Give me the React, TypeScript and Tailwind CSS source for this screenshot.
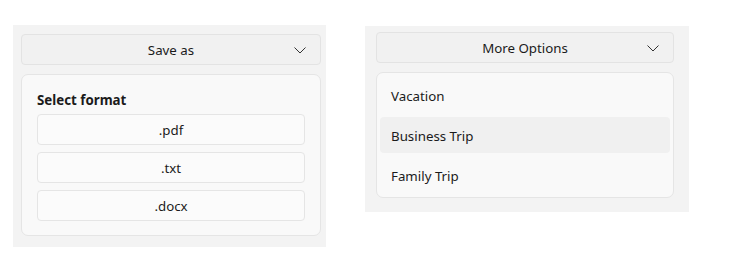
import React from "react";

const font = { fontFamily: '"Noto Sans", "Open Sans", sans-serif' };

function Chevron() {
  return (
    <svg width="12" height="7" viewBox="0 0 12 7" fill="none">
      <path d="M0.5 0.5 L6 6 L11.5 0.5" stroke="#333" strokeWidth="1" />
    </svg>
  );
}

function Header({ label }: { label: string }) {
  return (
    <div className="relative flex h-[31px] items-center justify-center rounded-[4px] border border-[#e3e3e3] bg-[#f1f1f1] pt-[3px] text-[13.3px] text-[#1b1b1b]">
      <span>{label}</span>
      <span className="absolute right-[14px] top-[12px] flex">
        <Chevron />
      </span>
    </div>
  );
}

export default function App() {
  return (
    <div className="flex items-start bg-white pl-[13px] pt-[25px]" style={font}>
      <div className="flex w-[313px] flex-col gap-[9px] bg-[#f3f3f3] pb-[11px] pl-[8px] pr-[5px] pt-[9px]">
        <Header label="Save as" />
        <div className="flex flex-col gap-[4px] rounded-[7px] border border-[#e5e5e5] bg-[#f9f9f9] px-[15px] pb-[14px] pt-[15px]">
          <div className="text-[13.3px] font-bold leading-[20px] text-[#1b1b1b]">Select format</div>
          <div className="flex flex-col gap-[7px]">
            {[".pdf", ".txt", ".docx"].map((t) => (
              <div
                key={t}
                className="flex h-[31px] items-center justify-center rounded-[4px] border border-[#e5e5e5] bg-[#fbfbfb] pt-[3px] text-[13.3px] text-[#1b1b1b]"
              >
                {t}
              </div>
            ))}
          </div>
        </div>
      </div>
      <div className="ml-[39px] mt-px flex w-[324px] flex-col gap-[9px] bg-[#f3f3f3] pb-[14px] pl-[11px] pr-[15px] pt-[6px]">
        <Header label="More Options" />
        <div className="flex flex-col gap-[4px] rounded-[7px] border border-[#e5e5e5] bg-[#f9f9f9] px-[3px] py-[4px]">
          {["Vacation", "Business Trip", "Family Trip"].map((t, i) => (
            <div
              key={t}
              className={
                "flex h-[36px] items-center rounded-[4px] pl-[11px] pt-[3px] text-[13.3px] text-[#1b1b1b] " +
                (i === 1 ? "bg-[#f0f0f0]" : "")
              }
            >
              {t}
            </div>
          ))}
        </div>
      </div>
    </div>
  );
}
